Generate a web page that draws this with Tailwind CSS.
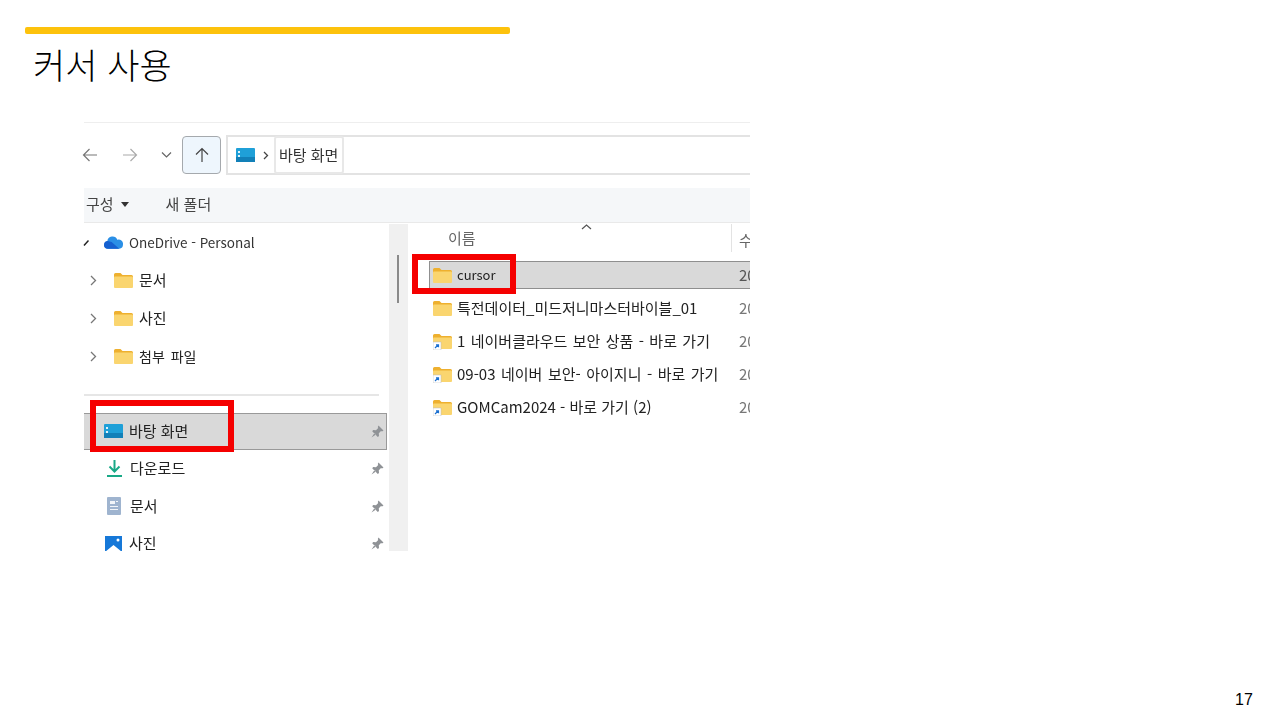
<html lang="ko">
<head>
  <meta charset="utf-8" />
  <title>커서 사용</title>
  <script src="https://cdn.jsdelivr.net/npm/@tailwindcss/browser@4"></script>
</head>
<body class="bg-white w-[1280px] h-[720px] overflow-hidden relative font-['Noto_Sans_CJK_KR','Noto_Sans',sans-serif] text-[#222]">
  <!-- slide header -->
  <div class="ml-[25px] mt-[27px] w-[485px] h-[7px] rounded-[2px] bg-[#fdc20c]"></div>
  <h1 class="ml-[33px] mt-[7px] h-[48px] text-[35px] leading-[46px] font-light text-black">커서 사용</h1>

  <!-- explorer window -->
  <div class="ml-[82px] mt-[33px] w-[668px] h-[429px] overflow-hidden flex flex-col text-[15px] blur-[0.4px]">
    <div class="ml-[2px] h-px shrink-0 bg-[#eeeeee]"></div>
    <!-- nav row -->
    <div class="h-[65px] flex items-center shrink-0 pb-[1px]">
      <svg class="w-[16px] h-[16px] shrink-0" viewBox="0 0 16 16" fill="none" stroke="#777" stroke-width="1.2"><path d="M15 8H1.5M7.5 2 1.500 8l6 6" /></svg>
      <svg class="w-[15px] h-[16px] ml-[25px] shrink-0" viewBox="0 0 15 16" fill="none" stroke="#aaa" stroke-width="1.2"><path d="M0 8h13.5M7.500 2l6 6-6 6" /></svg>
      <svg class="w-[11px] h-[8px] ml-[23px] shrink-0" viewBox="0 0 11 8" fill="none" stroke="#666" stroke-width="1.2"><path d="m1 1.500 4.500 4.500L10 1.500" /></svg>
      <div class="w-[39px] h-[38px] ml-[10px] shrink-0 rounded-[4px] border border-[#a5a9ad] bg-[#eef6fd] flex items-center justify-center">
        <svg class="w-[16px] h-[16px]" viewBox="0 0 16 16" fill="none" stroke="#444" stroke-width="1.2"><path d="M8 15V1.500M2 7.500l6-6 6 6" /></svg>
      </div>
      <div class="h-[40px] ml-[5px] flex-1 border-2 border-r-0 border-[#e3e3e3] flex items-center">
        <svg class="w-[19px] h-[15px] ml-[8px] shrink-0" viewBox="0 0 19 15"><rect width="19" height="14" rx="1" fill="#1fa0d8" /><rect y="9" width="19" height="5" fill="#1280b8" /><path d="M2 3h2v2H2zM2 7h2v2H2z" fill="#dff3fb" /></svg>
        <svg class="w-[6px] h-[9px] ml-[8px] shrink-0" viewBox="0 0 6 9" fill="none" stroke="#444" stroke-width="1.300"><path d="m1 1 3.500 3.500L1 8" /></svg>
        <div class="h-[38px] ml-[5px] pl-[3px] w-[70px] shrink-0 border-2 border-[#e8e8e8] rounded-[3px] flex items-center whitespace-nowrap text-[#333]">바탕 화면</div>
      </div>
    </div>

    <!-- toolbar -->
    <div class="ml-[2px] h-[35px] shrink-0 bg-[#f5f7f9] border-b border-[#e9e9e9] flex items-center text-[#444] pb-[2px]">
      <span class="ml-[2px]">구성</span>
      <span class="ml-[7px] w-0 h-0 border-x-[4px] border-x-transparent border-t-[5px] border-t-[#333]"></span>
      <span class="ml-[37px]">새 폴더</span>
    </div>

    <div class="ml-[2px] flex flex-1 min-h-0 pt-[1px]">
      <!-- sidebar -->
      <div class="w-[303px] shrink-0 flex flex-col">
        <div class="h-[37px] shrink-0 flex items-center">
          <svg class="w-[6px] h-[6px] ml-[-1px] shrink-0" viewBox="0 0 6 6" fill="none" stroke="#222" stroke-width="1.500"><path d="M5.500.5 1 5.500" /></svg>
          <svg class="w-[19px] h-[13px] ml-[15px] shrink-0" viewBox="0 0 20 13"><path d="M4 13a4 4 0 0 1-.5-7.900A5.500 5.500 0 0 1 14 3.500 4.700 4.700 0 0 1 20 8.500 4.500 4.500 0 0 1 16 13z" fill="#2a8fe6" /><path d="M4 13a4 4 0 0 1 0-8l4 1 8 7z" fill="#1560d0" /></svg>
          <span class="ml-[6px] text-[#333] text-[13.5px]">OneDrive - Personal</span>
        </div>
        <div class="h-[38px] shrink-0 flex items-center">
          <svg class="w-[7px] h-[11px] ml-[6px] shrink-0" viewBox="0 0 7 11" fill="none" stroke="#777" stroke-width="1.300"><path d="m1 1 4.500 4.500L1 10" /></svg>
          <svg class="w-[19px] h-[15px] ml-[17px] shrink-0" viewBox="0 0 19 15"><path d="M0 1.500A1.500 1.500 0 0 1 1.500 0h5l2 2h9A1.500 1.500 0 0 1 19 3.500V5H0z" fill="#eeb02f" /><rect y="3.500" width="19" height="11.500" rx="1" fill="#fad56f" /></svg>
          <span class="ml-[6px]">문서</span>
        </div>
        <div class="h-[38px] shrink-0 flex items-center">
          <svg class="w-[7px] h-[11px] ml-[6px] shrink-0" viewBox="0 0 7 11" fill="none" stroke="#777" stroke-width="1.300"><path d="m1 1 4.500 4.500L1 10" /></svg>
          <svg class="w-[19px] h-[15px] ml-[17px] shrink-0" viewBox="0 0 19 15"><path d="M0 1.500A1.500 1.500 0 0 1 1.500 0h5l2 2h9A1.500 1.500 0 0 1 19 3.500V5H0z" fill="#eeb02f" /><rect y="3.500" width="19" height="11.500" rx="1" fill="#fad56f" /></svg>
          <span class="ml-[6px]">사진</span>
        </div>
        <div class="h-[38px] shrink-0 flex items-center">
          <svg class="w-[7px] h-[11px] ml-[6px] shrink-0" viewBox="0 0 7 11" fill="none" stroke="#777" stroke-width="1.300"><path d="m1 1 4.500 4.500L1 10" /></svg>
          <svg class="w-[19px] h-[15px] ml-[17px] shrink-0" viewBox="0 0 19 15"><path d="M0 1.500A1.500 1.500 0 0 1 1.500 0h5l2 2h9A1.500 1.500 0 0 1 19 3.500V5H0z" fill="#eeb02f" /><rect y="3.500" width="19" height="11.500" rx="1" fill="#fad56f" /></svg>
          <span class="ml-[6px] text-[14px] [word-spacing:2px]">첨부 파일</span>
        </div>
        <div class="mt-[19px] w-[295px] h-[2px] bg-[#e6e6e6] shrink-0"></div>
        <div class="mt-[17px] h-[37px] shrink-0 flex items-center bg-[#d9d9d9] border-y border-r border-[#999999]">
          <svg class="w-[19px] h-[15px] ml-[20px] shrink-0" viewBox="0 0 19 15"><rect width="19" height="14" rx="1" fill="#1fa0d8" /><rect y="9" width="19" height="5" fill="#1280b8" /><path d="M2 3h2v2H2zM2 7h2v2H2z" fill="#dff3fb" /></svg>
          <span class="ml-[6px]">바탕 화면</span>
          <svg class="w-[13px] h-[13px] ml-auto mr-[2px] shrink-0" viewBox="0 0 13 13" fill="#8f9296"><path d="M7.500.5 12.500 5.500 11 6.500 10 6 7.800 8.300 8 11 6.800 12 1.200 6.300 2.200 5 5 5.200 7.200 3 6.800 2zM3.500 8 .5 12.500 5 9.500z" /></svg>
        </div>
        <div class="h-[37px] shrink-0 flex items-center">
          <svg class="w-[15px] h-[17px] ml-[23px] shrink-0" viewBox="0 0 15 17" fill="none" stroke="#19a987" stroke-width="2"><path d="M7.500 0v11M2.500 6.500l5 5 5-5M0 16h15" /></svg>
          <span class="ml-[8px]">다운로드</span>
          <svg class="w-[13px] h-[13px] ml-auto mr-[3px] shrink-0" viewBox="0 0 13 13" fill="#8f9296"><path d="M7.500.5 12.500 5.500 11 6.500 10 6 7.800 8.300 8 11 6.800 12 1.200 6.300 2.200 5 5 5.200 7.200 3 6.800 2zM3.500 8 .5 12.500 5 9.500z" /></svg>
        </div>
        <div class="h-[38px] shrink-0 flex items-center">
          <svg class="w-[14px] h-[18px] ml-[23px] shrink-0" viewBox="0 0 14 18"><rect width="14" height="18" rx="1" fill="#9fb4cf" /><path d="M3 4h5v3H3zM3 9h8v1H3zM3 12h8v1H3zM9 4h2v1H9z" fill="#f2f5f9" /></svg>
          <span class="ml-[9px]">문서</span>
          <svg class="w-[13px] h-[13px] ml-auto mr-[3px] shrink-0" viewBox="0 0 13 13" fill="#8f9296"><path d="M7.500.5 12.500 5.500 11 6.500 10 6 7.800 8.300 8 11 6.800 12 1.200 6.300 2.200 5 5 5.200 7.200 3 6.800 2zM3.500 8 .5 12.500 5 9.500z" /></svg>
        </div>
        <div class="h-[37px] shrink-0 flex items-center">
          <svg class="w-[17px] h-[16px] ml-[21px] shrink-0" viewBox="0 0 17 16"><path d="M0 0h17v16l-8.500-7L0 16z" fill="#1678d8" /><circle cx="13" cy="4" r="1.500" fill="#fff" /></svg>
          <span class="ml-[7px]">사진</span>
          <svg class="w-[13px] h-[13px] ml-auto mr-[3px] shrink-0" viewBox="0 0 13 13" fill="#8f9296"><path d="M7.500.5 12.500 5.500 11 6.500 10 6 7.800 8.300 8 11 6.800 12 1.200 6.300 2.200 5 5 5.200 7.200 3 6.800 2zM3.500 8 .5 12.500 5 9.500z" /></svg>
        </div>
      </div>

      <!-- scrollbar -->
      <div class="w-[19px] ml-[2px] shrink-0 bg-[#f0f0f0] pt-[31px] pl-[8px]">
        <div class="w-[2px] h-[48px] bg-[#8a8a8a]"></div>
      </div>

      <!-- file list -->
      <div class="flex-1 min-w-0 pl-[21px]">
        <div class="h-[37px] relative flex items-start pl-[19px] text-[#666]">
          <span class="mt-[3px] w-[283px] shrink-0 leading-[22px] whitespace-nowrap">이름</span>
          <svg class="absolute left-[152px] top-0 w-[11px] h-[6px]" viewBox="0 0 11 6" fill="none" stroke="#555" stroke-width="1.200"><path d="m1 5 4.500-4L10 5" /></svg>
          <div class="w-px h-[28px] bg-[#e3e3e3] shrink-0"></div>
          <span class="ml-[7px] mt-[5px] leading-[22px]">수</span>
        </div>
        <div class="h-[28px] flex items-center bg-[#d9d9d9] border-y border-l border-[#8f8f8f]">
          <svg class="w-[19px] h-[15px] ml-[3px] shrink-0" viewBox="0 0 19 15"><path d="M0 1.500A1.500 1.500 0 0 1 1.500 0h5l2 2h9A1.500 1.500 0 0 1 19 3.500V5H0z" fill="#eeb02f" /><rect y="3.500" width="19" height="11.500" rx="1" fill="#fad56f" /></svg>
          <span class="ml-[5px] w-[282px] shrink-0 text-[13px]">cursor</span>
          <span class="text-[#555]">20</span>
        </div>
        <div class="h-[33px] mt-[3px] flex items-center">
          <svg class="w-[19px] h-[15px] ml-[4px] shrink-0" viewBox="0 0 19 15"><path d="M0 1.500A1.500 1.500 0 0 1 1.500 0h5l2 2h9A1.500 1.500 0 0 1 19 3.500V5H0z" fill="#eeb02f" /><rect y="3.500" width="19" height="11.500" rx="1" fill="#fad56f" /></svg>
          <span class="ml-[5px] w-[282px] shrink-0 whitespace-nowrap">특전데이터_미드저니마스터바이블_01</span>
          <span class="text-[#777]">20</span>
        </div>
        <div class="h-[33px] flex items-center">
          <svg class="w-[19px] h-[16px] ml-[4px] shrink-0" viewBox="0 0 19 16"><path d="M0 1.500A1.500 1.500 0 0 1 1.500 0h5l2 2h9A1.500 1.500 0 0 1 19 3.500V5H0z" fill="#eeb02f" /><rect y="3.500" width="19" height="11.500" rx="1" fill="#fad56f" /><rect y="8" width="8" height="8" fill="#fff" stroke="#bbb" stroke-width=".5" /><path d="M2 14l3-3M3 10.800h2.500v2.500" stroke="#1a6fd0" stroke-width="1.200" fill="none" /></svg>
          <span class="ml-[5px] w-[282px] shrink-0 whitespace-nowrap [word-spacing:1.200px]">1 네이버클라우드 보안 상품 - 바로 가기</span>
          <span class="text-[#777]">20</span>
        </div>
        <div class="h-[33px] flex items-center">
          <svg class="w-[19px] h-[16px] ml-[4px] shrink-0" viewBox="0 0 19 16"><path d="M0 1.500A1.500 1.500 0 0 1 1.500 0h5l2 2h9A1.500 1.500 0 0 1 19 3.500V5H0z" fill="#eeb02f" /><rect y="3.500" width="19" height="11.500" rx="1" fill="#fad56f" /><rect y="8" width="8" height="8" fill="#fff" stroke="#bbb" stroke-width=".5" /><path d="M2 14l3-3M3 10.800h2.500v2.500" stroke="#1a6fd0" stroke-width="1.200" fill="none" /></svg>
          <span class="ml-[5px] w-[282px] shrink-0 whitespace-nowrap [word-spacing:1.300px]">09-03 네이버 보안- 아이지니 - 바로 가기</span>
          <span class="text-[#777]">20</span>
        </div>
        <div class="h-[33px] flex items-center">
          <svg class="w-[19px] h-[16px] ml-[4px] shrink-0" viewBox="0 0 19 16"><path d="M0 1.500A1.500 1.500 0 0 1 1.500 0h5l2 2h9A1.500 1.500 0 0 1 19 3.500V5H0z" fill="#eeb02f" /><rect y="3.500" width="19" height="11.500" rx="1" fill="#fad56f" /><rect y="8" width="8" height="8" fill="#fff" stroke="#bbb" stroke-width=".5" /><path d="M2 14l3-3M3 10.800h2.500v2.500" stroke="#1a6fd0" stroke-width="1.200" fill="none" /></svg>
          <span class="ml-[5px] w-[282px] shrink-0 whitespace-nowrap">GOMCam2024 - 바로 가기 (2)</span>
          <span class="text-[#777]">20</span>
        </div>
      </div>
    </div>
  </div>

  <!-- red annotation boxes -->
  <div class="absolute left-[90px] top-[400px] w-[144px] h-[52px] border-[6px] border-[#f50000]"></div>
  <div class="absolute left-[412px] top-[254px] w-[104px] h-[40px] border-[6px] border-[#f50000]"></div>

  <div class="absolute left-[1235px] top-[690px] text-[16px] leading-[20px] text-black font-['Liberation_Sans',sans-serif]">17</div>
</body>
</html>
